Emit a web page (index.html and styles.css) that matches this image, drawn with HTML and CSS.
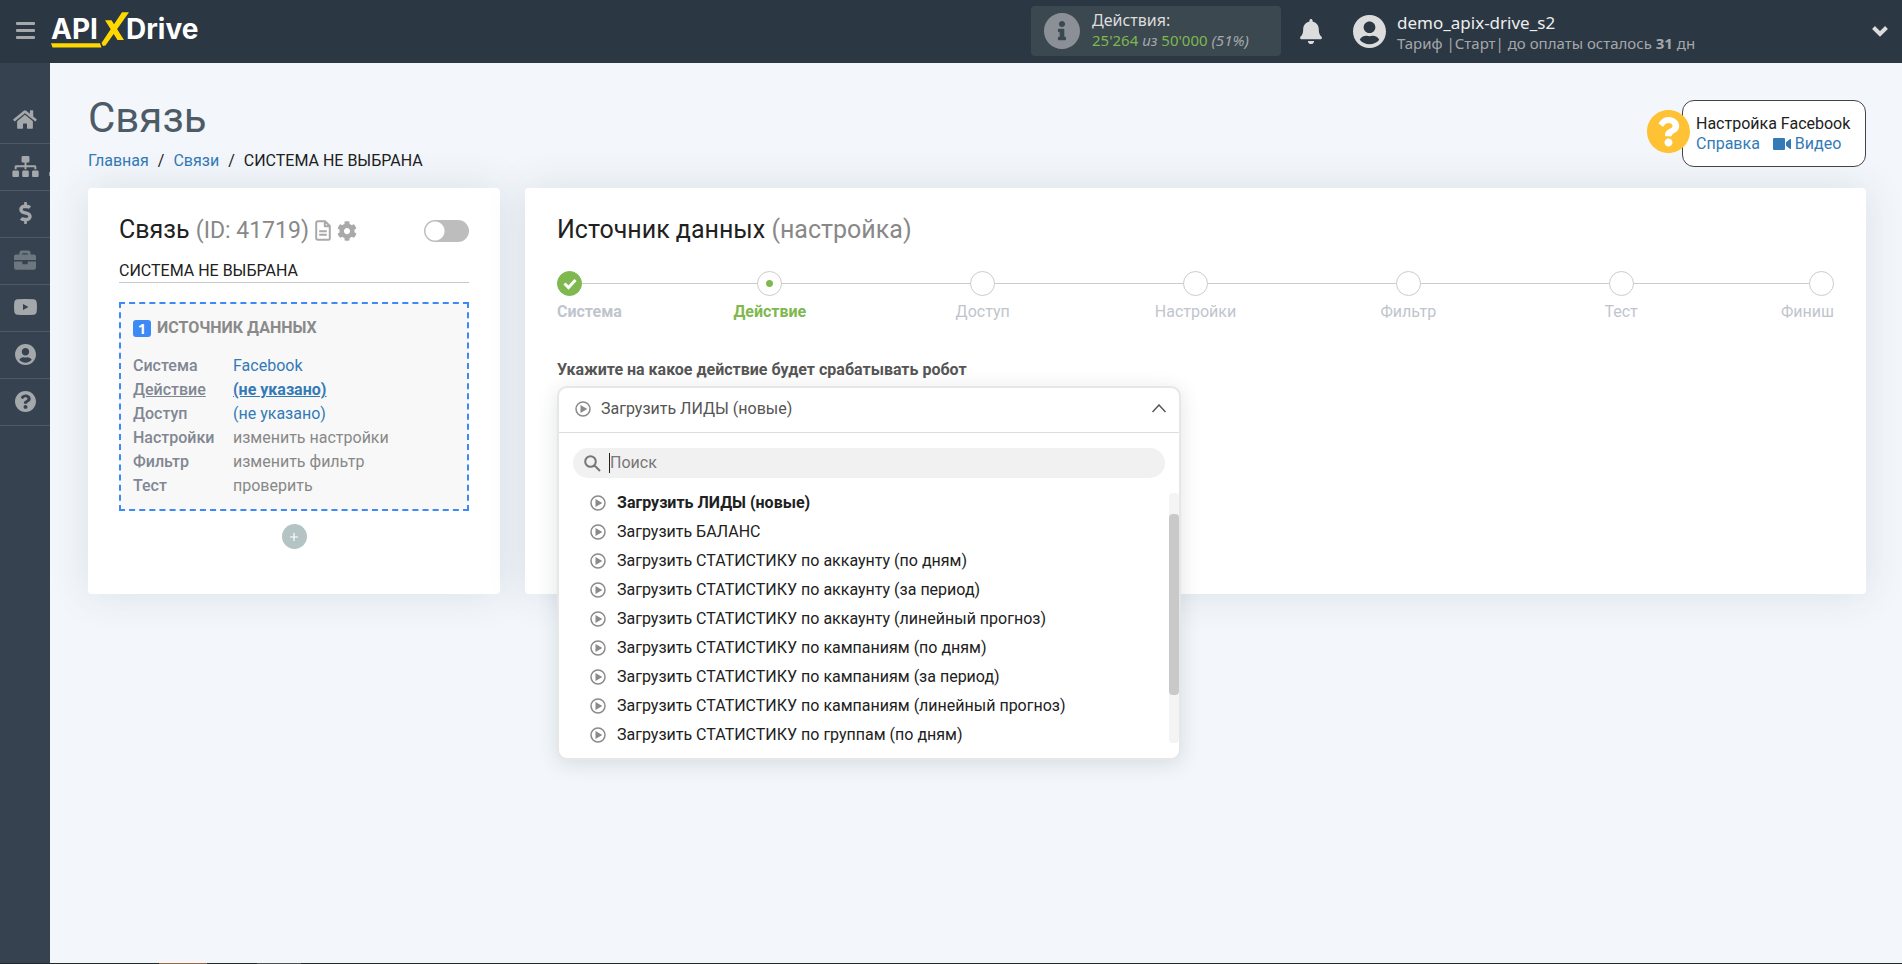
FILE: index.html
```html
<!DOCTYPE html>
<html lang="ru">
<head>
<meta charset="utf-8">
<title>Связь — ApiX-Drive</title>
<meta name="viewport" content="width=device-width, initial-scale=1">
<link rel="stylesheet" href="styles.css">
</head>
<body>
<svg class="sprite" aria-hidden="true">
  <symbol id="i-home" viewBox="0 0 576 512"><path d="M280.37 148.26L96 300.11V464a16 16 0 0 0 16 16l112.06-.29a16 16 0 0 0 15.92-16V368a16 16 0 0 1 16-16h64a16 16 0 0 1 16 16v95.64a16 16 0 0 0 16 16.05L464 480a16 16 0 0 0 16-16V300L295.67 148.26a12.19 12.19 0 0 0-15.3 0zM571.6 251.47L488 182.56V44.05a12 12 0 0 0-12-12h-56a12 12 0 0 0-12 12v72.61L318.47 43a48 48 0 0 0-61 0L4.34 251.47a12 12 0 0 0-1.6 16.9l25.5 31A12 12 0 0 0 45.15 301l235.22-193.74a12.19 12.19 0 0 1 15.3 0L530.9 301a12 12 0 0 0 16.9-1.6l25.5-31a12 12 0 0 0-1.7-16.93z"/></symbol>
  <symbol id="i-sitemap" viewBox="0 0 640 512"><path d="M128 352H32c-17.67 0-32 14.33-32 32v96c0 17.67 14.33 32 32 32h96c17.67 0 32-14.33 32-32v-96c0-17.67-14.33-32-32-32zm-24-80h192v48h48v-48h192v48h48v-57.59c0-21.17-17.23-38.41-38.41-38.41H344v-64h40c17.67 0 32-14.33 32-32V32c0-17.67-14.33-32-32-32H256c-17.67 0-32 14.33-32 32v96c0 17.67 14.33 32 32 32h40v64H94.41C73.23 224 56 241.23 56 262.41V320h48v-48zm264 80h-96c-17.67 0-32 14.33-32 32v96c0 17.67 14.33 32 32 32h96c17.67 0 32-14.33 32-32v-96c0-17.67-14.33-32-32-32zm240 0h-96c-17.67 0-32 14.33-32 32v96c0 17.67 14.33 32 32 32h96c17.67 0 32-14.33 32-32v-96c0-17.67-14.33-32-32-32z"/></symbol>
  <symbol id="i-dollar" viewBox="0 0 288 512"><path d="M209.2 233.4l-108-31.6C88.7 198.2 80 186.5 80 173.5c0-16.3 13.2-29.5 29.5-29.5h66.3c12.2 0 24.2 3.7 34.2 10.5 6.1 4.1 14.3 3.1 19.5-2l34.8-34c7.1-6.9 6.1-18.4-1.8-24.5C238 74.8 207.4 64.1 176 64V16c0-8.8-7.2-16-16-16h-32c-8.8 0-16 7.2-16 16v48h-2.5C45.8 64-5.4 118.7.5 183.6c4.2 46.1 39.4 83.6 83.8 96.6l102.5 30c12.5 3.7 21.2 15.3 21.2 28.3 0 16.3-13.2 29.5-29.5 29.5h-66.3C100 368 88 364.3 78 357.5c-6.1-4.1-14.3-3.1-19.5 2l-34.8 34c-7.1 6.9-6.1 18.4 1.8 24.5 24.5 19.2 55.1 29.9 86.5 30v48c0 8.8 7.2 16 16 16h32c8.8 0 16-7.2 16-16v-48.2c46.6-.9 90.3-28.6 105.7-72.7 21.5-61.6-14.6-124.8-72.5-141.7z"/></symbol>
  <symbol id="i-briefcase" viewBox="0 0 512 512"><path d="M320 336c0 8.84-7.16 16-16 16h-96c-8.84 0-16-7.16-16-16v-48H0v144c0 25.6 22.4 48 48 48h416c25.6 0 48-22.4 48-48V288H320v48zm144-208h-80V80c0-25.6-22.4-48-48-48H176c-25.6 0-48 22.4-48 48v48H48c-25.6 0-48 22.4-48 48v80h512v-80c0-25.6-22.4-48-48-48zm-144 0H192V96h128v32z"/></symbol>
  <symbol id="i-youtube" viewBox="0 0 23 16"><path fill-rule="evenodd" d="M3.500 .3Q11.500-.3 19.500 .3Q22.500 .5 22.700 3.500Q23.200 8 22.700 12.500Q22.500 15.500 19.500 15.700Q11.500 16.300 3.500 15.700Q.5 15.500 .3 12.500Q-.2 8 .3 3.500Q.5 .5 3.500 .3zM9 5v6l5.500-3z"/></symbol>
  <symbol id="i-user" viewBox="0 8 496 496"><path d="M248 8C111 8 0 119 0 256s111 248 248 248 248-111 248-248S385 8 248 8zm0 96c48.6 0 88 39.4 88 88s-39.4 88-88 88-88-39.4-88-88 39.4-88 88-88zm0 344c-58.7 0-111.3-26.6-146.5-68.2 18.8-35.4 55.6-59.8 98.5-59.8 2.4 0 4.8.4 7.1 1.1 13 4.2 26.6 6.9 40.9 6.9 14.3 0 28-2.7 40.9-6.9 2.3-.7 4.7-1.1 7.1-1.1 42.9 0 79.7 24.4 98.5 59.8C359.3 421.4 306.7 448 248 448z"/></symbol>
  <symbol id="i-question" viewBox="8 8 496 496"><path d="M504 256c0 136.997-111.043 248-248 248S8 392.997 8 256C8 119.083 119.043 8 256 8s248 111.083 248 248zM262.655 90c-54.497 0-89.255 22.957-116.549 63.758-3.536 5.286-2.353 12.415 2.715 16.258l34.699 26.31c5.205 3.947 12.621 3.008 16.665-2.122 17.864-22.658 30.113-35.797 57.303-35.797 20.429 0 45.698 13.148 45.698 32.958 0 14.976-12.363 22.667-32.534 33.976C247.128 238.528 216 254.941 216 296v4c0 6.627 5.373 12 12 12h56c6.627 0 12-5.373 12-12v-1.333c0-28.462 83.186-29.647 83.186-106.667 0-58.002-60.165-102-116.531-102zM256 338c-25.365 0-46 20.635-46 46 0 25.364 20.635 46 46 46s46-20.636 46-46c0-25.365-20.635-46-46-46z"/></symbol>
  <symbol id="i-info" viewBox="8 8 496 496"><path d="M256 8C119.043 8 8 119.083 8 256c0 136.997 111.043 248 248 248s248-111.003 248-248C504 119.083 392.957 8 256 8zm0 110c23.196 0 42 18.804 42 42s-18.804 42-42 42-42-18.804-42-42 18.804-42 42-42zm56 254c0 6.627-5.373 12-12 12h-88c-6.627 0-12-5.373-12-12v-24c0-6.627 5.373-12 12-12h12v-64h-12c-6.627 0-12-5.373-12-12v-24c0-6.627 5.373-12 12-12h64c6.627 0 12 5.373 12 12v100h12c6.627 0 12 5.373 12 12v24z"/></symbol>
  <symbol id="i-bell" viewBox="0 0 448 512"><path d="M224 512c35.32 0 63.97-28.65 63.97-64H160.03c0 35.35 28.65 64 63.97 64zm215.39-149.71c-19.32-20.76-55.47-51.99-55.47-154.29 0-77.7-54.48-139.9-127.94-155.16V32c0-17.67-14.32-32-31.98-32s-31.98 14.33-31.98 32v20.84C118.56 68.1 64.08 130.3 64.08 208c0 102.3-36.15 133.53-55.47 154.29-6 6.45-8.66 14.16-8.61 21.71.11 16.4 12.98 32 32.1 32h383.8c19.12 0 32-15.6 32.1-32 .05-7.55-2.61-15.27-8.61-21.71z"/></symbol>
  <symbol id="i-cog" viewBox="0 0 512 512"><path d="M487.4 315.7l-42.6-24.6c4.3-23.2 4.3-47 0-70.2l42.6-24.6c4.9-2.8 7.1-8.6 5.5-14-11.1-35.6-30-67.8-54.7-94.6-3.8-4.1-10-5.1-14.8-2.3L380.8 110c-17.9-15.4-38.5-27.3-60.8-35.1V25.8c0-5.6-3.9-10.5-9.4-11.7-36.7-8.2-74.3-7.8-109.2 0-5.500 1.200-9.400 6.100-9.400 11.700V75c-22.200 7.900-42.800 19.800-60.800 35.100L88.700 85.500c-4.900-2.800-11-1.900-14.800 2.300-24.700 26.700-43.600 58.900-54.700 94.600-1.700 5.400.6 11.200 5.500 14L67.300 221c-4.300 23.200-4.300 47 0 70.200l-42.600 24.600c-4.900 2.800-7.100 8.600-5.500 14 11.100 35.600 30 67.800 54.700 94.600 3.800 4.100 10 5.100 14.800 2.300l42.600-24.600c17.900 15.400 38.500 27.300 60.800 35.100v49.200c0 5.600 3.900 10.500 9.400 11.700 36.700 8.200 74.300 7.800 109.200 0 5.500-1.200 9.400-6.100 9.400-11.700v-49.200c22.200-7.900 42.800-19.800 60.800-35.100l42.600 24.600c4.900 2.800 11 1.900 14.800-2.300 24.700-26.700 43.600-58.900 54.700-94.600 1.500-5.500-.7-11.300-5.600-14.100zM256 336c-44.100 0-80-35.900-80-80s35.900-80 80-80 80 35.900 80 80-35.900 80-80 80z"/></symbol>
  <symbol id="i-doc" viewBox="0 0 16 21"><path fill="none" stroke="currentColor" stroke-width="2" stroke-linejoin="round" d="M3 1.200H10L14.800 6V18.500Q14.800 19.800 13.500 19.800H3Q1.200 19.800 1.200 18V3Q1.200 1.200 3 1.200zM9.800 1.500V6.300H14.500M4.200 11.200H11.800M4.200 14.800H11.800"/></symbol>
  <symbol id="i-play" viewBox="0 0 16 16"><circle cx="8" cy="8" r="7" fill="none" stroke="currentColor" stroke-width="1.500"/><path d="M5.500 4v8L12.300 8z"/></symbol>
  <symbol id="i-search" viewBox="0 0 17 17"><path fill="none" stroke="currentColor" stroke-width="2" d="M11.800 6.500A5.300 5.300 0 1 1 1.200 6.500A5.300 5.300 0 0 1 11.800 6.500zM10.300 10.300L16 16"/></symbol>
  <symbol id="i-video" viewBox="0 0 18 12"><path d="M1 0H11Q12 0 12 1V11Q12 12 11 12H1Q0 12 0 11V1Q0 0 1 0zM13 4.200L17 1Q18 .6 18 1.600V10.400Q18 11.400 17 11L13 7.800z"/></symbol>
</svg>

<header class="topbar">
  <button class="menu-btn" type="button" aria-label="Меню"><span></span><span></span><span></span></button>
  <a class="logo" href="#" aria-label="ApiX-Drive">
    <svg width="154" height="38" viewBox="0 0 154 38">
      <text class="logo-text" x="1" y="29">API</text>
      <text class="logo-text" x="76" y="29">Drive</text>
      <path class="logo-mark" d="M1 33.200H50L51.500 37.500H2.500zM51.500 33L72 2.200H79L55.500 35.500L53 36zM55 10.200H61.500L74 30H67.500z"/>
    </svg>
  </a>
  <div class="topbar-right">
    <div class="usage">
      <svg class="usage-icon"><use href="#i-info"/></svg>
      <div class="usage-text">
        <div class="usage-title">Действия:</div>
        <div class="usage-line"><span class="green">25'264</span> <i>из</i> <span class="green">50'000</span> <i>(51%)</i></div>
      </div>
    </div>
    <button class="bell" type="button" aria-label="Уведомления"><svg><use href="#i-bell"/></svg></button>
    <button class="account" type="button">
      <svg class="account-icon"><use href="#i-user"/></svg>
      <span class="account-text">
        <span class="account-name">demo_apix-drive_s2</span>
        <span class="account-plan">Тариф |Старт| до оплаты осталось <b>31</b> дн</span>
      </span>
      <svg class="account-caret" viewBox="0 0 16 12"><path fill="none" stroke="currentColor" stroke-width="4" d="M1.500 2.500L8 9L14.500 2.500"/></svg>
    </button>
  </div>
</header>

<div class="layout">
  <nav class="sidebar" aria-label="Разделы">
    <a href="#" aria-label="Главная"><svg class="w24"><use href="#i-home"/></svg></a>
    <a href="#" aria-label="Связи" class="current"><svg class="w27"><use href="#i-sitemap"/></svg></a>
    <a href="#" aria-label="Оплата"><svg class="w13"><use href="#i-dollar"/></svg></a>
    <a href="#" aria-label="Проекты" class="dim"><svg class="w22"><use href="#i-briefcase"/></svg></a>
    <a href="#" aria-label="Видео"><svg class="yt"><use href="#i-youtube"/></svg></a>
    <a href="#" aria-label="Профиль"><svg class="w21"><use href="#i-user"/></svg></a>
    <a href="#" aria-label="Помощь"><svg class="w21"><use href="#i-question"/></svg></a>
  </nav>

  <main class="content">
    <div class="page-head">
      <div>
        <h1>Связь</h1>
        <nav class="crumbs" aria-label="Путь">
          <a href="#">Главная</a><span>/</span><a href="#">Связи</a><span>/</span><strong>СИСТЕМА НЕ ВЫБРАНА</strong>
        </nav>
      </div>
      <aside class="help">
        <svg class="help-icon"><use href="#i-question"/></svg>
        <div>Настройка Facebook</div>
        <div class="help-links"><a href="#">Справка</a><a href="#"><svg><use href="#i-video"/></svg>Видео</a></div>
      </aside>
    </div>

    <div class="cards">
      <section class="card side-card">
        <div class="side-head">
          <h2>Связь <span>(ID: 41719)</span></h2>
          <button class="icon-btn" type="button" aria-label="Журнал"><svg class="doc"><use href="#i-doc"/></svg></button>
          <button class="icon-btn" type="button" aria-label="Параметры"><svg class="cog"><use href="#i-cog"/></svg></button>
          <input class="switch" type="checkbox" role="switch" aria-label="Включить связь">
        </div>
        <div class="conn-name">СИСТЕМА НЕ ВЫБРАНА</div>
        <div class="source">
          <h3><span class="num">1</span>ИСТОЧНИК ДАННЫХ</h3>
          <dl>
            <dt>Система</dt><dd><a href="#">Facebook</a></dd>
            <dt class="active">Действие</dt><dd class="active"><a href="#">(не указано)</a></dd>
            <dt>Доступ</dt><dd><a href="#">(не указано)</a></dd>
            <dt>Настройки</dt><dd>изменить настройки</dd>
            <dt>Фильтр</dt><dd>изменить фильтр</dd>
            <dt>Тест</dt><dd>проверить</dd>
          </dl>
        </div>
        <button class="add" type="button" aria-label="Добавить"><svg viewBox="0 0 8 8"><path stroke="currentColor" stroke-width="1.200" d="M0 4H8M4 0V8"/></svg></button>
      </section>

      <section class="card main-card">
        <h2>Источник данных <span>(настройка)</span></h2>
        <ol class="steps">
          <li class="done"><span class="dot"><svg viewBox="0 0 14 12"><path fill="none" stroke="currentColor" stroke-width="3" d="M1.500 5.500L5.500 9.500L12.500 2"/></svg></span>Система</li>
          <li class="now"><span class="dot"></span>Действие</li>
          <li><span class="dot"></span>Доступ</li>
          <li><span class="dot"></span>Настройки</li>
          <li><span class="dot"></span>Фильтр</li>
          <li><span class="dot"></span>Тест</li>
          <li><span class="dot"></span>Финиш</li>
        </ol>
        <div class="field-label" id="action-label">Укажите на какое действие будет срабатывать робот</div>
        <div class="select">
          <div class="select-box">
            <button class="select-toggle" type="button" aria-expanded="true" aria-labelledby="action-label">
              <svg class="play"><use href="#i-play"/></svg>Загрузить ЛИДЫ (новые)
              <svg class="caret" viewBox="0 0 14 9"><path fill="none" stroke="currentColor" stroke-width="1.500" d="M.5 8L7 1L13.500 8"/></svg>
            </button>
            <label class="search">
              <svg><use href="#i-search"/></svg>
              <span class="cursor"></span>
              <input type="text" placeholder="Поиск" aria-label="Поиск">
            </label>
            <div class="options-wrap">
              <ul class="options" role="listbox" aria-labelledby="action-label">
                <li role="option" aria-selected="true"><svg class="play"><use href="#i-play"/></svg>Загрузить ЛИДЫ (новые)</li>
                <li role="option"><svg class="play"><use href="#i-play"/></svg>Загрузить БАЛАНС</li>
                <li role="option"><svg class="play"><use href="#i-play"/></svg>Загрузить СТАТИСТИКУ по аккаунту (по дням)</li>
                <li role="option"><svg class="play"><use href="#i-play"/></svg>Загрузить СТАТИСТИКУ по аккаунту (за период)</li>
                <li role="option"><svg class="play"><use href="#i-play"/></svg>Загрузить СТАТИСТИКУ по аккаунту (линейный прогноз)</li>
                <li role="option"><svg class="play"><use href="#i-play"/></svg>Загрузить СТАТИСТИКУ по кампаниям (по дням)</li>
                <li role="option"><svg class="play"><use href="#i-play"/></svg>Загрузить СТАТИСТИКУ по кампаниям (за период)</li>
                <li role="option"><svg class="play"><use href="#i-play"/></svg>Загрузить СТАТИСТИКУ по кампаниям (линейный прогноз)</li>
                <li role="option"><svg class="play"><use href="#i-play"/></svg>Загрузить СТАТИСТИКУ по группам (по дням)</li>
              </ul>
              <div class="track"><div class="thumb"></div></div>
            </div>
          </div>
        </div>
      </section>
    </div>
  </main>
</div>
<footer class="edge"><span class="edge-orange"></span><span class="edge-grey"></span></footer>
</body>
</html>
```
FILE: styles.css
```css
* { box-sizing: border-box; }
body {
  margin: 0;
  min-height: 100vh;
  display: flex;
  flex-direction: column;
  background: #f3f7fc;
  color: #212121;
  font: 16px/24px Roboto, "Noto Sans", sans-serif;
}
svg { display: block; flex: none; fill: currentColor; }
.sprite { position: absolute; width: 0; height: 0; }
button { border: 0; padding: 0; background: none; color: inherit; font: inherit; text-align: left; cursor: pointer; }
a { color: #337ab7; text-decoration: none; }
h1, h2, h3, dl, dd, ol, ul { margin: 0; padding: 0; font-weight: 400; list-style: none; }

/* top bar */
.topbar {
  display: flex;
  align-items: center;
  height: 63px;
  background: #2b3743;
  color: #dcdcdc;
  font-family: "Noto Sans", sans-serif;
}
.menu-btn { width: 50px; padding: 0 0 3px 16px; display: grid; gap: 4px; }
.menu-btn span { width: 19px; height: 3px; border-radius: 1px; background: #a5a8ab; }
.logo { margin-bottom: 5px; }
.logo-text { font: 700 28px Inter, "Open Sans", sans-serif; fill: #fff; }
.logo-mark { fill: #ffd800; }
.topbar-right { display: flex; align-items: center; margin-left: auto; padding-bottom: 1px; }
.usage {
  display: flex;
  align-items: center;
  gap: 12px;
  width: 250px;
  height: 50px;
  padding-left: 13px;
  border-radius: 4px;
  background: #3b4850;
}
.usage-icon { width: 36px; height: 36px; color: #8a9096; }
.usage-text { padding-bottom: 2px; }
.usage-title { line-height: 20px; }
.usage-line { font-size: 15px; line-height: 20px; color: #a5a8ab; }
.green { color: #7cb84f; }
.bell { margin: 0 31px 0 19px; }
.bell svg { width: 22px; height: 25px; }
.account { display: flex; align-items: center; width: 549px; padding-right: 14px; }
.account-icon { width: 33px; height: 33px; margin-right: 11px; }
.account-text { display: grid; flex: 1; padding-top: 3px; }
.account-name { font-size: 17px; line-height: 20px; color: #eee; }
.account-plan { font-size: 15px; line-height: 20px; color: #a5a8ab; }
.account-caret { width: 16px; height: 12px; }

/* side navigation */
.layout { display: flex; flex: 1; }
.sidebar { width: 50px; padding-top: 34px; background: #36424f; color: #a5a8ab; }
.sidebar a {
  display: flex;
  align-items: center;
  justify-content: center;
  height: 47px;
  padding-bottom: 2px;
  border-bottom: 1px solid #4c5966;
  color: inherit;
}
.sidebar .current { background: linear-gradient(#8a9096, #8a9096) no-repeat right 28px / 1px 4px; background-position: right 28px; }
.sidebar .dim { color: #6d7780; }
.w24 { width: 24px; height: 21px; }
.w27 { width: 27px; height: 21px; }
.w13 { width: 13px; height: 22px; }
.w22 { width: 22px; height: 22px; }
.w21 { width: 21px; height: 21px; }
.yt { width: 23px; height: 16px; }

/* page head */
.content { flex: 1; min-width: 0; padding: 32px 36px 40px 38px; }
.page-head { display: flex; justify-content: space-between; align-items: flex-start; }
h1 { font-size: 42px; line-height: 46px; color: #4d5b66; }
.crumbs { display: flex; gap: 9px; padding-top: 8px; }
.crumbs strong { font-weight: 400; }
.help {
  position: relative;
  width: 184px;
  margin: 5px 0 21px;
  padding: 13px 12px 12px 13px;
  border: 1px solid #444;
  border-radius: 12px;
  background: #fff;
  line-height: 20px;
}
.help-icon { position: absolute; left: -36px; top: 9px; width: 43px; height: 43px; color: #ffc234; background: radial-gradient(circle, #fff 18px, transparent 19px); }
.help-links { display: flex; gap: 13px; }
.help-links a { display: flex; align-items: center; gap: 4px; }
.help-links svg { width: 18px; height: 12px; }

/* cards */
.cards { display: flex; gap: 25px; }
.card { padding: 25px 32px 45px; border-radius: 4px; background: #fff; box-shadow: 0 0 40px rgba(43, 55, 67, .12); }
h2 { font-size: 25px; line-height: 34px; }
h2 span { color: #888; }
.side-card { flex: none; width: 412px; padding-left: 31px; padding-right: 31px; }
.side-head { display: flex; align-items: center; gap: 6px; }
.side-head span { font-size: 23px; }
.icon-btn { color: #a9a9a9; }
.doc { width: 16px; height: 21px; }
.cog { width: 20px; height: 20px; }
.switch {
  appearance: none;
  width: 45px;
  height: 22px;
  margin: 0 0 0 auto;
  border-radius: 11px;
  background: radial-gradient(circle at 11px 11px, #fff 9px, #bdbdbd 10px);
}
.conn-name { margin-bottom: 19px; padding-top: 11px; border-bottom: 1px solid #c8c8c8; line-height: 23px; }
.source { padding: 12px 12px 11px; border: 2px dashed #3d8af7; background: #f8f8f8; color: #888; }
h3 { display: flex; align-items: center; gap: 6px; font-size: 16px; font-weight: 700; color: #8a8a8a; }
.num { width: 18px; height: 17px; border-radius: 3px; background: #3d8af7; color: #fff; font: 700 14px/17px "Noto Sans", sans-serif; text-align: center; }
dl { display: grid; grid-template-columns: 100px 1fr; padding-top: 14px; }
dt { font-weight: 500; color: #808792; }
.active { text-decoration: underline; }
.active a { font-weight: 700; text-decoration: underline; }
.add {
  display: grid;
  place-items: center;
  width: 25px;
  height: 25px;
  margin: 13px auto 0;
  border-radius: 50%;
  background: #b4c3c3;
  color: #fff;
}
.add svg { width: 8px; height: 8px; }

/* setup steps */
.main-card { flex: 1; min-width: 0; }
.steps { display: flex; padding-top: 24px; color: #c0c5cd; }
.steps li {
  flex: 2 1 0;
  display: flex;
  flex-direction: column;
  align-items: center;
  gap: 4px;
  background: linear-gradient(#ccc, #ccc) no-repeat 0 12px / 100% 1px;
}
.steps li:first-child { flex-grow: 1; align-items: flex-start; }
.steps li:last-child { flex-grow: 1; align-items: flex-end; }
.dot { display: grid; place-items: center; width: 25px; height: 25px; border: 1px solid #ccc; border-radius: 50%; background: #fff; }
.done { font-weight: 700; }
.done .dot { background: #7fb84f; border-color: #7fb84f; color: #fff; }
.done svg { width: 14px; height: 12px; }
.now { font-weight: 700; color: #7fb84f; }
.now .dot { background: radial-gradient(circle, #7fb84f 3px, #fff 4px); }
.field-label { margin-top: 34px; font-weight: 700; color: #555; }

/* action picker */
.select { position: relative; width: 624px; max-width: 100%; height: 46px; margin-top: 4px; }
.select-box {
  position: absolute;
  inset: 0 0 auto;
  border: 2px solid #e7e7e7;
  border-radius: 10px;
  background: #fff;
  box-shadow: 0 4px 20px rgba(43, 55, 67, .14);
}
.select-toggle { display: flex; align-items: center; gap: 10px; width: 100%; height: 45px; padding: 0 13px 3px 16px; border-bottom: 1px solid #ddd; color: #555; }
.play { width: 16px; height: 16px; color: #8a8a8a; }
.caret { width: 14px; height: 9px; margin-left: auto; color: #555; }
.search { display: flex; align-items: center; height: 30px; margin: 15px 14px; padding: 0 11px; border-radius: 15px; background: #f1f1f1; color: #777; }
.search svg { width: 17px; height: 17px; }
.cursor { width: 1px; height: 20px; margin-left: 8px; background: #222; }
.search input { flex: 1; min-width: 0; padding: 0; border: 0; outline: 0; background: none; font: inherit; }
.search input::placeholder { color: #777; }
.options-wrap { display: flex; align-items: flex-start; padding-bottom: 9px; }
.options { flex: 1; padding: 0 16px 0 31px; margin-top: -5px; }
.options li { display: flex; align-items: center; gap: 11px; height: 29px; }
.options [aria-selected="true"] { font-weight: 700; }
.track { width: 10px; height: 250px; padding-top: 21px; border-radius: 4px; background: #f4f4f4; }
.thumb { height: 181px; border-radius: 4px; background: #c9c9c9; }

/* bottom edge */
.edge { display: flex; height: 1px; padding-left: 159px; gap: 50px; background: #222a28; }
.edge-orange { width: 48px; background: #a0673a; }
.edge-grey { width: 44px; background: #4c5351; }
```
